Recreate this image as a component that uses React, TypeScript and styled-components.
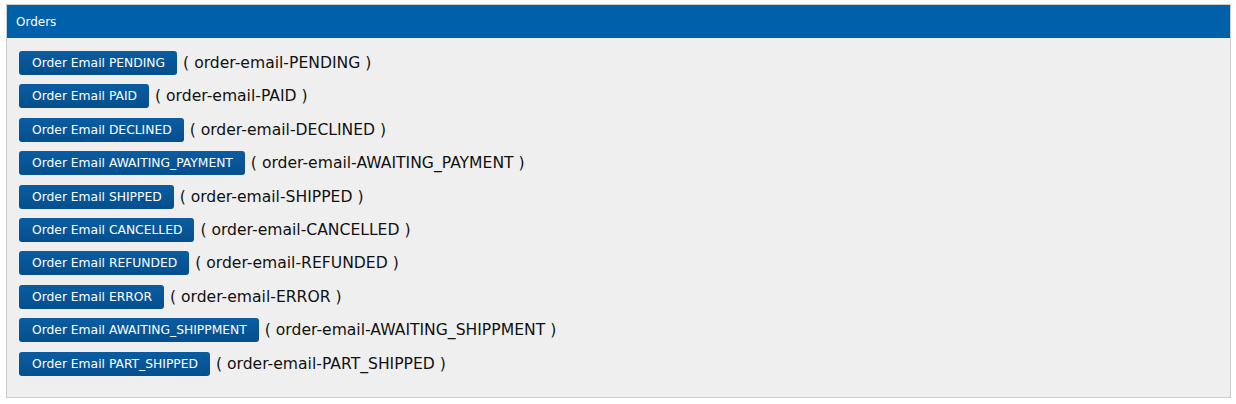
import styled, { createGlobalStyle } from 'styled-components'

const GlobalStyle = createGlobalStyle`
  body {
    margin: 0;
    background: #ffffff;
    font-family: "DejaVu Sans", "Liberation Sans", sans-serif;
  }
`

const Page = styled.div`
  padding: 4px 5px 0 6px;
`

const Panel = styled.div`
  border: 1px solid #cccccc;
  background: #efefef;
`

const PanelHeader = styled.div`
  height: 33px;
  background: #0060a9;
  color: #ffffff;
  font-size: 12px;
  display: flex;
  align-items: center;
  padding-left: 9px;
`

const PanelBody = styled.div`
  display: flex;
  flex-direction: column;
  gap: 9.4px;
  padding: 13px 12px 21px 12px;
`

const Row = styled.div`
  display: flex;
  align-items: center;
  height: 24px;
`

const EmailButton = styled.button`
  height: 24px;
  padding: 0 12px 0 13px;
  border: none;
  border-radius: 3px;
  background: linear-gradient(#0a5ca2, #044f8d);
  color: #ffffff;
  font-family: "DejaVu Sans", "Liberation Sans", sans-serif;
  font-size: 12.3px;
  cursor: pointer;
  white-space: nowrap;
`

const TemplateName = styled.span`
  margin-left: 6px;
  font-size: 15.6px;
  color: #111111;
  white-space: nowrap;
`

const statuses = [
  'PENDING',
  'PAID',
  'DECLINED',
  'AWAITING_PAYMENT',
  'SHIPPED',
  'CANCELLED',
  'REFUNDED',
  'ERROR',
  'AWAITING_SHIPPMENT',
  'PART_SHIPPED',
]

const App: React.FC = () => {
  return (
    <Page>
      <GlobalStyle />
      <Panel>
        <PanelHeader>Orders</PanelHeader>
        <PanelBody>
          {statuses.map((s) => (
            <Row key={s}>
              <EmailButton>Order Email {s}</EmailButton>
              <TemplateName>( order-email-{s} )</TemplateName>
            </Row>
          ))}
        </PanelBody>
      </Panel>
    </Page>
  )
}

export default App
